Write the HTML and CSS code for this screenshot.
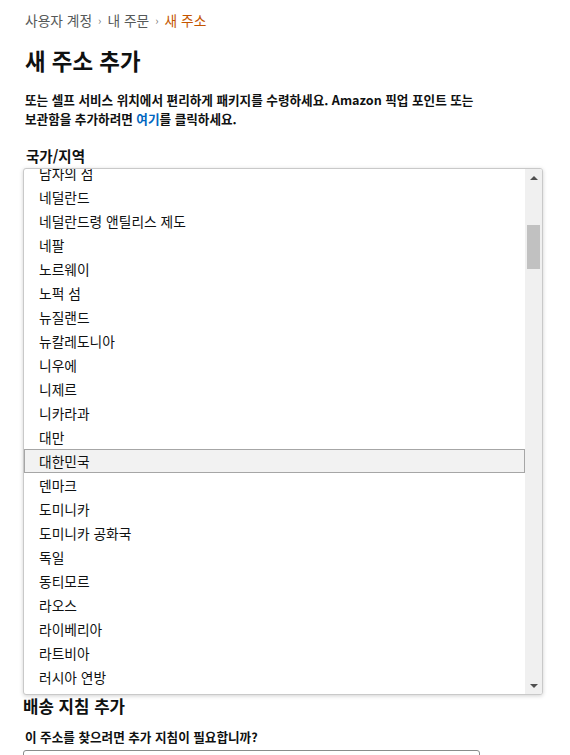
FILE: index.html
```html
<!DOCTYPE html>
<html lang="ko">
<head>
<meta charset="utf-8">
<link rel="stylesheet" href="styles.css">
</head>
<body>
<div class="page">
  <nav class="crumbs">
    <a class="crumb">사용자 계정</a><span class="sep">›</span><a class="crumb">내 주문</a><span class="sep">›</span><span class="crumb current">새 주소</span>
  </nav>
  <h1 class="title">새 주소 추가</h1>
  <p class="desc">또는 셀프 서비스 위치에서 편리하게 패키지를 수령하세요. Amazon 픽업 포인트 또는 보관함을 추가하려면 <a class="link">여기</a>를 클릭하세요.</p>
  <div class="label">국가/지역</div>
  <div class="listbox">
    <ul class="options">
      <li>남자의 섬</li>
      <li>네덜란드</li>
      <li>네덜란드령 앤틸리스 제도</li>
      <li>네팔</li>
      <li>노르웨이</li>
      <li>노퍽 섬</li>
      <li>뉴질랜드</li>
      <li>뉴칼레도니아</li>
      <li>니우에</li>
      <li>니제르</li>
      <li>니카라과</li>
      <li>대만</li>
      <li class="selected">대한민국</li>
      <li>덴마크</li>
      <li>도미니카</li>
      <li>도미니카 공화국</li>
      <li>독일</li>
      <li>동티모르</li>
      <li>라오스</li>
      <li>라이베리아</li>
      <li>라트비아</li>
      <li>러시아 연방</li>
      <li>레바논</li>
    </ul>
    <div class="scrollbar">
      <div class="arrow up"></div>
      <div class="track"><div class="thumb"></div></div>
      <div class="arrow down"></div>
    </div>
  </div>
  <h2 class="subtitle">배송 지침 추가</h2>
  <div class="label label2">이 주소를 찾으려면 추가 지침이 필요합니까?</div>
  <div class="textarea"></div>
</div>
</body>
</html>
```
FILE: styles.css
```css
* { box-sizing: border-box; }
html, body { margin: 0; padding: 0; background: #fff; }
body {
  font-family: "Noto Sans CJK KR", "Noto Sans", sans-serif;
  color: #0f1111;
  font-size: 13.75px;
  overflow: hidden;
}
.page { padding: 11px 0 0 23px; width: 570px; }
.crumbs { font-size: 13.75px; line-height: 19px; color: #565959; display: flex; align-items: center; padding-left: 2px; }
.crumb { color: #565959; }
.crumb.current { color: #c45500; }
.sep { font-size: 11px; margin: 0 6px; color: #777; }
.title { margin: 16px 0 0 2px; font-size: 22.4px; line-height: 28px; font-weight: 700; color: #0f1111; }
.desc { margin: 16px 0 0 2px; width: 480px; font-weight: 700; font-size: 12.6px; line-height: 19px; word-break: keep-all; }
.link { color: #0066c0; }
.label { margin-top: 18px; font-weight: 700; font-size: 14.5px; line-height: 19px; padding-left: 3px; }
.listbox {
  margin-top: 3px;
  width: 520px;
  height: 527px;
  border: 1px solid #c9c9c9;
  border-radius: 3px;
  box-shadow: 0 1px 4px rgba(0,0,0,0.18);
  background: #fff;
  display: flex;
  overflow: hidden;
}
.options { list-style: none; margin: -8px 0 0 0; padding: 0; flex: 1; }
.options li { height: 24px; line-height: 22px; padding-left: 14px; font-size: 13.75px; white-space: nowrap; border: 1px solid transparent; }
.options li.selected { background: #f2f2f2; border-color: #a6a6a6; }
.scrollbar { width: 17px; background: #f0f0f0; display: flex; flex-direction: column; }
.arrow { height: 17px; display: flex; align-items: center; justify-content: center; }
.arrow.up::before { content: ""; border-left: 4px solid transparent; border-right: 4px solid transparent; border-bottom: 4px solid #505050; }
.arrow.down::before { content: ""; border-left: 4px solid transparent; border-right: 4px solid transparent; border-top: 4px solid #505050; }
.track { flex: 1; padding: 39px 2px 0; }
.thumb { height: 44px; background: #c1c1c1; }
.subtitle { margin: 0; font-size: 16.8px; line-height: 22px; font-weight: 700; padding-left: 0; }
.label2 { margin-top: 10px; padding-left: 2px; font-size: 12.6px; }
.textarea { margin-top: 4px; width: 457px; height: 40px; border: 1px solid #888c8c; border-radius: 3px; }
```
